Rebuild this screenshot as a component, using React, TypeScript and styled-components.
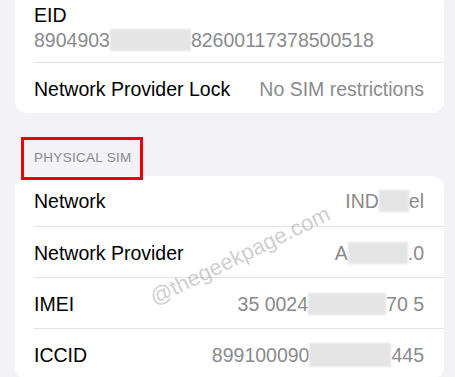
import React from "react";
import styled, { createGlobalStyle } from "styled-components";

const Global = createGlobalStyle`
  html, body { margin: 0; padding: 0; background: #f2f2f7; }
  body { font-family: "Liberation Sans", Arial, sans-serif; overflow: hidden; }
`;

const Page = styled.div`
  position: relative;
  width: 455px;
  height: 377px;
  overflow: hidden;
  background: #f2f2f7;
`;

const Column = styled.div`
  display: flex;
  flex-direction: column;
  margin-top: -8px;
  padding: 0 11px 0 15px;
`;

const Card = styled.div`
  background: #ffffff;
  border-radius: 12px;
  overflow: hidden;
`;

const Row = styled.div<{ $h?: number }>`
  box-sizing: border-box;
  display: flex;
  align-items: center;
  justify-content: space-between;
  height: 50px;
  margin-left: 19px;
  padding-right: 20px;
  & + & {
    height: ${(p) => p.$h ?? 53}px;
    padding-top: 2px;
    border-top: 1px solid #e3e3e6;
  }
`;

const StackRow = styled(Row)`
  flex-direction: column;
  align-items: flex-start;
  justify-content: flex-start;
  height: auto;
  gap: 3px;
  padding-top: 11.5px;
  padding-bottom: 11.5px;
`;

const Label = styled.span`
  font-size: 19.5px;
  line-height: 22px;
  color: #000000;
  white-space: nowrap;
`;

const Value = styled.span`
  font-size: 19.5px;
  line-height: 22px;
  color: #8a8a8e;
  white-space: nowrap;
  display: inline-flex;
  align-items: center;
`;

const Patch = styled.span<{ $w: number; $h?: number }>`
  display: inline-block;
  width: ${(p) => p.$w}px;
  height: ${(p) => p.$h ?? 22}px;
  background: #e4e4e4;
  filter: blur(1px);
`;

const Header = styled.div`
  position: relative;
  margin: 35.5px 0 9.5px 19px;
  font-size: 13.5px;
  line-height: 18px;
  letter-spacing: 0.3px;
  color: #8a8a8e;
  &::after {
    content: "";
    position: absolute;
    left: -13px;
    top: -12px;
    width: 122px;
    height: 43px;
    box-sizing: border-box;
    border: 3px solid #f00000;
    z-index: 3;
  }
`;

const Watermark = styled.div`
  position: absolute;
  left: 240px;
  top: 256px;
  transform: translate(-50%, -50%) rotate(-26deg);
  font-size: 22px;
  color: rgba(110, 110, 110, 0.35);
  white-space: nowrap;
  pointer-events: none;
  z-index: 2;
`;

export default function App() {
  return (
    <Page>
      <Global />
      <Column>
        <Card>
          <StackRow>
            <Label>EID</Label>
            <Value>
              8904903
              <Patch $w={81} />
              82600117378500518
            </Value>
          </StackRow>
          <Row $h={51}>
            <Label>Network Provider Lock</Label>
            <Value>No SIM restrictions</Value>
          </Row>
        </Card>
        <Header>PHYSICAL SIM</Header>
        <Card>
          <Row>
            <Label>Network</Label>
            <Value>
              IND
              <Patch $w={30} />
              el
            </Value>
          </Row>
          <Row>
            <Label>Network Provider</Label>
            <Value>
              A
              <Patch $w={60} />
              .0
            </Value>
          </Row>
          <Row>
            <Label>IMEI</Label>
            <Value>
              35 0024
              <Patch $w={78} />
              70 5
            </Value>
          </Row>
          <Row>
            <Label>ICCID</Label>
            <Value>
              899100090
              <Patch $w={82} $h={24} />
              445
            </Value>
          </Row>
        </Card>
      </Column>
      <Watermark>@thegeekpage.com</Watermark>
    </Page>
  );
}
